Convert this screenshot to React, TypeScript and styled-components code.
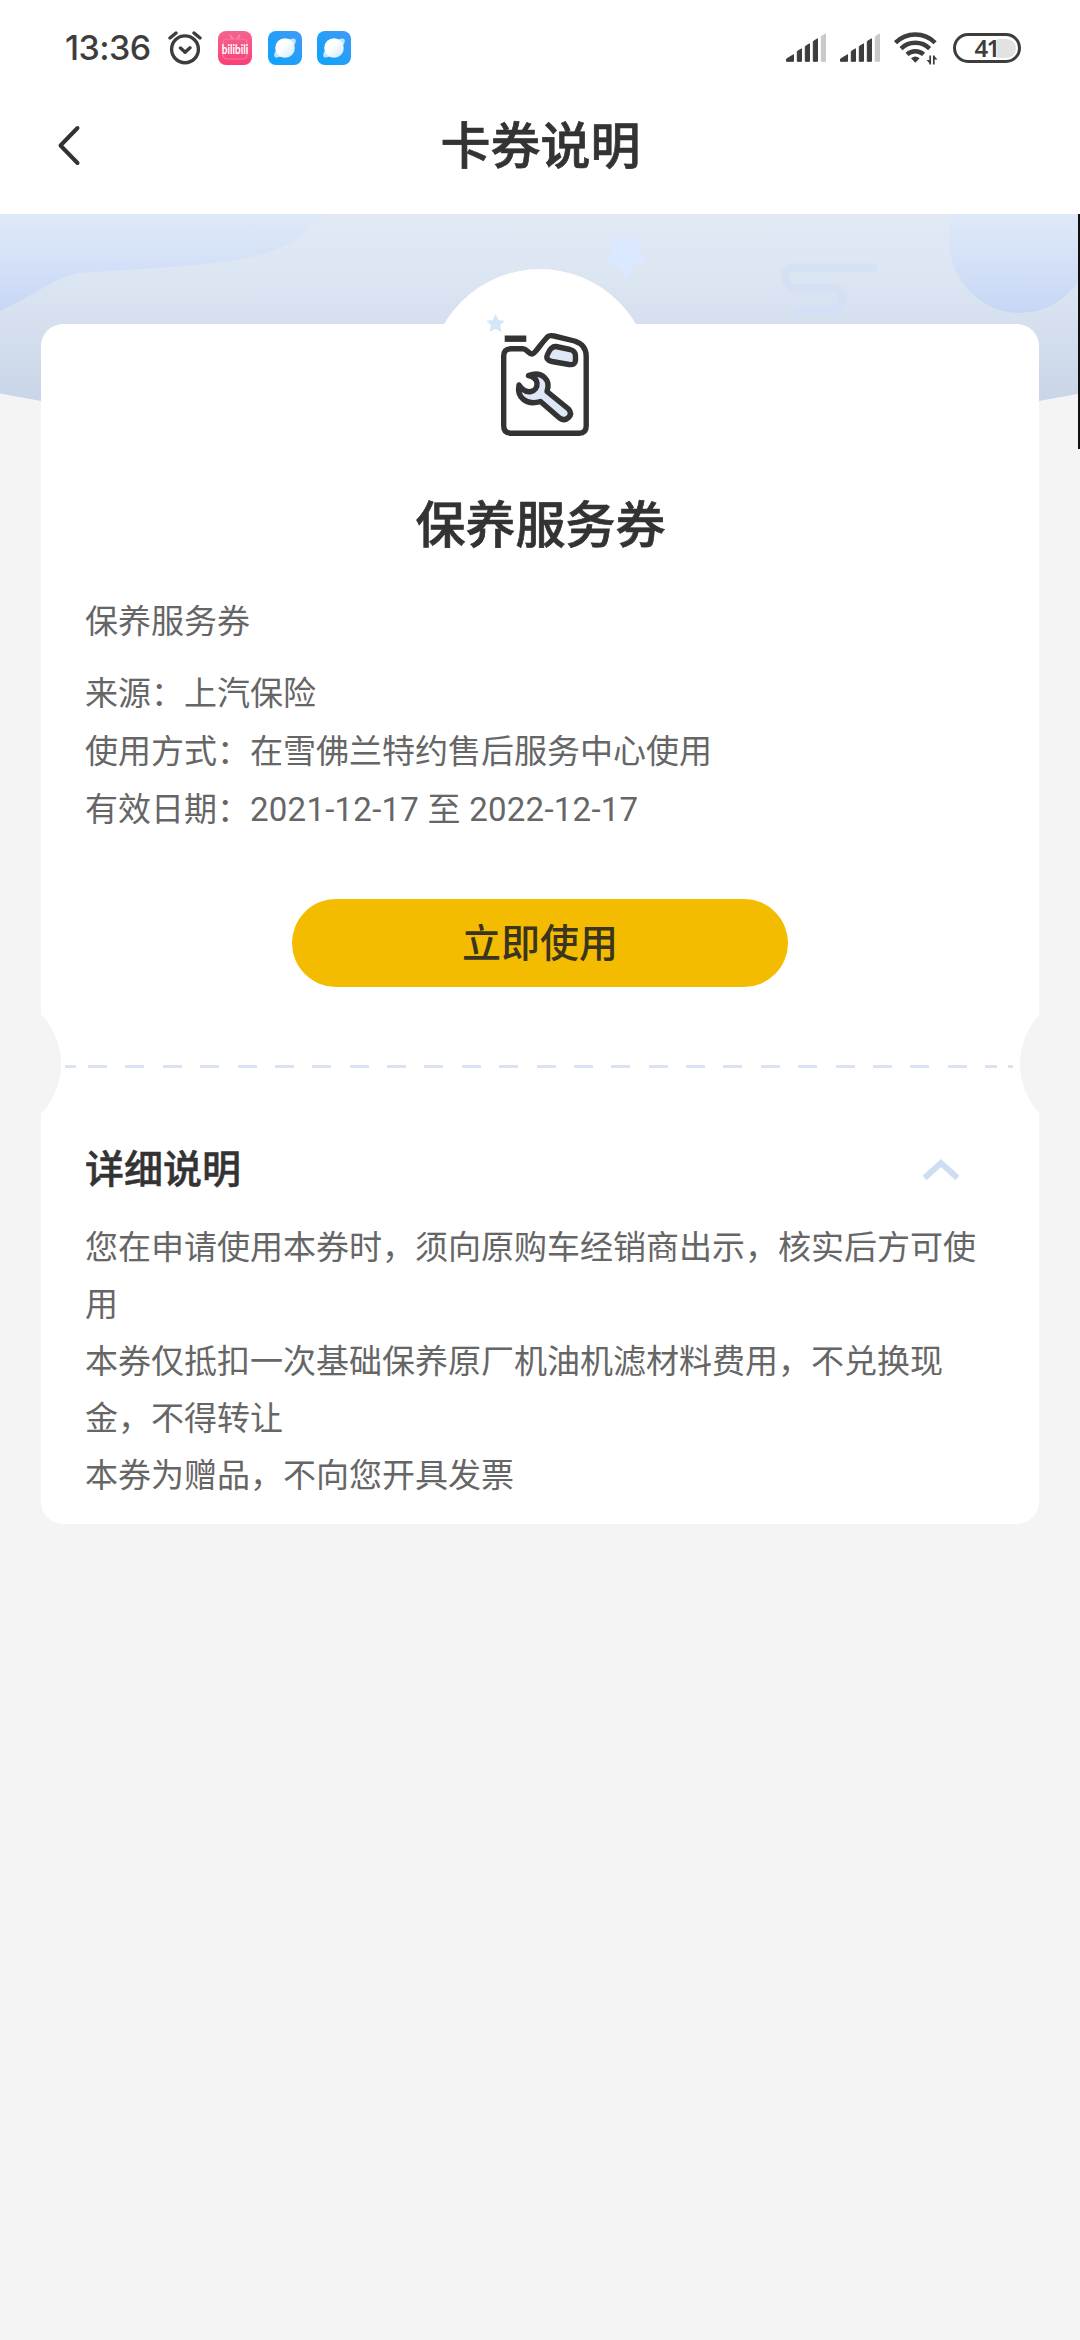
import React from "react";
import styled, { createGlobalStyle } from "styled-components";

const GlobalStyle = createGlobalStyle`
  * { box-sizing: border-box; }
  body {
    margin: 0;
    background: #f4f4f4;
    font-family: Roboto, "Noto Sans CJK SC", sans-serif;
    color: #333;
  }
`;

const Screen = styled.div`
  width: 1080px;
  height: 2340px;
  display: flex;
  flex-direction: column;
  background: #f4f4f4;
  overflow: hidden;
`;

const StatusBar = styled.header`
  height: 90px;
  padding: 6px 59px 0 65px;
  display: flex;
  align-items: center;
  justify-content: space-between;
  background: #fff;
`;

const StatusGroup = styled.div<{ $gap: number }>`
  display: flex;
  align-items: center;
  gap: ${(p) => p.$gap}px;
`;

const Clock = styled.span`
  width: 87px;
  font: 500 34px/40px Inter, sans-serif;
  letter-spacing: -0.6px;
  color: #3d3d3d;
  white-space: nowrap;
`;

const Battery = styled.div`
  width: 68px;
  height: 30px;
  margin-left: 2px;
  border: 3px solid #3d3d3d;
  border-radius: 15px;
  padding: 2.5px;
  display: flex;
`;

const BatteryLevel = styled.div`
  flex: 1;
  border-radius: 10px;
  background: linear-gradient(90deg, #fff 38px, #e2e2e2 38px);
  display: flex;
  align-items: center;
  justify-content: center;
  font: 600 24px/19px "Noto Sans", sans-serif;
  letter-spacing: -1.8px;
  color: #3d3d3d;
  padding: 0 1px 1px 0;
`;

const NavBar = styled.nav`
  height: 124px;
  flex: none;
  padding: 0 57px 13px;
  display: grid;
  grid-template-columns: 30px 1fr 30px;
  align-items: center;
  background: #fff;
`;

const BackButton = styled.button`
  border: 0;
  padding: 0;
  background: none;
  display: flex;
`;

const NavTitle = styled.h1`
  margin: 0;
  padding: 2px 0 0 1px;
  font-size: 50px;
  line-height: 60px;
  font-weight: 500;
  text-align: center;
  -webkit-text-stroke: 0.7px #333;
`;

const Content = styled.main`
  position: relative;
  flex: 1;
  padding: 110px 41px 0;
`;

const Banner = styled.svg`
  position: absolute;
  left: 0;
  top: 0;
`;

const ScrollThumb = styled.i`
  position: absolute;
  right: 0;
  top: 0;
  width: 2px;
  height: 235px;
  background: #111;
`;

const Card = styled.section`
  position: relative;
  width: 998px;
  height: 1200px;
  border-radius: 22px;
  background: #fff;
  display: flex;
  flex-direction: column;
`;

const Halo = styled.i`
  position: absolute;
  left: 388px;
  top: -55px;
  width: 222px;
  height: 222px;
  border-radius: 50%;
  background: #fff;
`;

const CouponIcon = styled.svg`
  position: absolute;
  left: 440px;
  top: -14px;
`;

const Summary = styled.div`
  position: relative;
  height: 691px;
  padding: 172px 44px 0;
  display: flex;
  flex-direction: column;
`;

const CouponTitle = styled.h2`
  margin: 0;
  padding-left: 1px;
  font-size: 50px;
  line-height: 60px;
  font-weight: 500;
  text-align: center;
  -webkit-text-stroke: 0.7px #333;
`;

const Line = styled.p<{ $after?: number; $height: number }>`
  margin: 0 0 ${(p) => p.$after ?? 0}px;
  font-size: 33px;
  line-height: ${(p) => p.$height}px;
  color: #666;
`;

const DateRange = styled.span`
  letter-spacing: 0.25px;
`;

const Info = styled.div`
  padding-top: 37px;
`;

const UseButton = styled.button`
  width: 496px;
  height: 88px;
  margin: 60px auto 0;
  padding: 2px 0 0;
  border: 0;
  border-radius: 44px;
  background: #f4bc00;
  color: #3b3520;
  font: 500 39px/56px Roboto, "Noto Sans CJK SC", sans-serif;
`;

const Perforation = styled.div`
  position: relative;
  height: 98px;
  overflow: hidden;
  display: flex;
  align-items: center;
  padding: 4px 26px 0 24px;
`;

const Notch = styled.i<{ $side: "left" | "right" }>`
  position: absolute;
  top: -23px;
  ${(p) => p.$side}: -124.5px;
  width: 144px;
  height: 144px;
  border-radius: 50%;
  background: #f4f4f4;
`;

const Dash = styled.i<{ $width: number; $gap: number }>`
  width: ${(p) => p.$width}px;
  height: 3px;
  margin-right: ${(p) => p.$gap}px;
  background: #dbe4f3;
`;

const DashRun = styled.i`
  flex: 1;
  height: 3px;
  background: repeating-linear-gradient(90deg, #dbe4f3 0 19px, #fff 19px 37.38px);
`;

const Details = styled.div`
  padding: 25px 44px 0;
`;

const DetailsHeader = styled.div`
  height: 63px;
  padding-right: 34px;
  display: flex;
  align-items: center;
  justify-content: space-between;
`;

const DetailsTitle = styled.h3`
  margin: 0;
  font-size: 39px;
  line-height: 58px;
  font-weight: 500;
  -webkit-text-stroke: 0.5px #333;
`;

const DetailsBody = styled.div`
  padding-top: 18px;
`;

const AlarmIcon = () => (
  <svg width="35" height="36" viewBox="0 0 35 36" fill="none" stroke="#3d3d3d" strokeWidth="3.4" strokeLinecap="round" strokeLinejoin="round">
    <circle cx="17" cy="19.3" r="13.4" />
    <path d="M12.500 18L17.100 22.200 22 17.800M2 8L8 3M32 8L26 3" />
  </svg>
);

const BiliIcon = () => (
  <svg width="34" height="34" viewBox="0 0 34 34">
    <defs>
      <linearGradient id="bili" x1="0" y1="0" x2="0" y2="1">
        <stop offset="0" stopColor="#f4648f" />
        <stop offset="1" stopColor="#fb3f78" />
      </linearGradient>
    </defs>
    <rect width="34" height="34" rx="8" fill="url(#bili)" />
    <path d="M12 4l3 4M22 4l-3 4" stroke="#f98bab" strokeWidth="1.6" />
    <rect x="5" y="8" width="24" height="20" rx="4" fill="none" stroke="#f77ba0" strokeWidth="1.2" />
    <text x="17" y="17" transform="scale(1 1.35)" textAnchor="middle" fill="#fff" fontFamily="Lato, sans-serif" fontWeight="700" fontSize="10">bilibili</text>
  </svg>
);

const PlanetIcon = () => (
  <svg width="34" height="34" viewBox="0 0 34 34">
    <defs>
      <linearGradient id="sky" x1="1" y1="0" x2="0" y2="1">
        <stop offset="0" stopColor="#3f9af8" />
        <stop offset="1" stopColor="#0aa4fb" />
      </linearGradient>
      <linearGradient id="globe" x1="0" y1="0" x2="1" y2="1">
        <stop offset="0.4" stopColor="#fff" />
        <stop offset="1" stopColor="#cfe6fc" />
      </linearGradient>
    </defs>
    <rect width="34" height="34" rx="8" fill="url(#sky)" />
    <ellipse cx="17" cy="17" rx="13.500" ry="5" fill="#c4e3fd" transform="rotate(-40 17 17)" />
    <circle cx="17" cy="17" r="9.800" fill="url(#globe)" />
  </svg>
);

const SignalIcon = () => (
  <svg width="41" height="30" viewBox="0 0 41 30">
    <g fill="#3d3d3d" stroke="#3d3d3d" strokeWidth="1" strokeLinejoin="round">
      <path d="M.5 28.300V26l7-4.300v6.600z" />
      <path d="M11.300 28.300V18.400l4.200-2.600v12.500z" />
      <path d="M19.300 28.300V13.400l4.200-2.600v17.500z" />
      <path d="M27.300 28.300V8.400l4.200-2.600v22.500z" />
    </g>
    <path d="M35.300 28.300V3.600l4.200-2.600v27.300z" fill="#c9c9c9" stroke="#c9c9c9" strokeWidth="1" strokeLinejoin="round" />
  </svg>
);

const WifiIcon = () => (
  <svg width="44" height="34" viewBox="0 0 44 34">
    <g fill="none" stroke="#3d3d3d" strokeWidth="4.4">
      <path d="M1.500 11.700a28 28 0 0 1 39.600 0" />
      <path d="M7 17.600a20.500 20.500 0 0 1 28.600 0" />
      <path d="M13 23.400a12.500 12.500 0 0 1 16.600 0" />
    </g>
    <path d="M17 27.200q4.300-3.600 8.600 0l-4.300 4.600z" fill="#3d3d3d" />
    <path d="M36.200 33.500V24.500M39.800 33.500V24.500" fill="none" stroke="#3d3d3d" strokeWidth="1.7" />
    <path d="M32.500 29h3.700v4zM43.500 28.500h-3.700v-4z" fill="#3d3d3d" />
  </svg>
);

const BannerArt = () => (
  <Banner width="1080" height="200" viewBox="0 214 1080 200">
    <defs>
      <linearGradient id="band" gradientUnits="userSpaceOnUse" x1="0" y1="214" x2="0" y2="401">
        <stop offset="0" stopColor="#e1e9f5" />
        <stop offset="0.35" stopColor="#dce5f2" />
        <stop offset="1" stopColor="#c9d5e8" />
      </linearGradient>
      <linearGradient id="shape" gradientUnits="userSpaceOnUse" x1="0" y1="214" x2="0" y2="312">
        <stop offset="0" stopColor="#dee9f8" />
        <stop offset="0.5" stopColor="#d4e0f7" />
        <stop offset="1" stopColor="#c6d7f5" />
      </linearGradient>
    </defs>
    <path d="M0 214H1080V393.500L1039 401 540 450 41 401 0 393.500z" fill="url(#band)" />
    <path d="M0 214H325C310 224 305 238 285 246C240 268 130 268 80 273C55 277 40 292 0 311z" fill="url(#shape)" />
    <ellipse cx="1020" cy="240" rx="71" ry="73" fill="url(#shape)" />
    <path d="M610 235L625.500 243 640 235 637.500 252 649 261 633 265 626.500 281 619 265.500 603 263 613 252z" fill="#dae9ff" />
    <path d="M873 267.500H793C782 269 782 288 796 288H832C847 289 846 309 832 310H797" fill="none" stroke="#d3dff6" strokeOpacity="0.85" strokeWidth="8" strokeLinecap="round" />
  </Banner>
);

const OilCanIcon = () => (
  <CouponIcon width="120" height="130" viewBox="480 310 120 130">
    <path d="M494.600 314l2.900 6 6.500.7-4.800 4.600 1.300 6.600-5.900-3.200-5.900 3.200 1.300-6.600-4.800-4.600 6.500-.7z" fill="#d3e7fb" />
    <g fill="none" stroke="#333" strokeWidth="5.4" strokeLinejoin="round">
      <path d="M503.700 338.700h21.600" strokeWidth="6.4" />
      <path d="M510 348.800H522C526 348.800 527.500 354 531 354C534 354 538 346 545.500 338C548 335 550 335.300 553 336L573.500 341C581 343.500 585.200 348.500 585.200 356V426Q585.200 433.200 578 433.200H510Q502.700 433.200 502.700 426V356Q502.700 348.800 510 348.800z" />
      <path d="M555 346.500L569 349.500Q574.500 351 574.500 356V360.500Q574 365.500 568 364.500L551 361.500Q544 360 546.500 354.500Q550 346 555 346.500z" fill="#dfe6f6" />
      <path d="M527.500 375.500C541 370.500 550 380 546 391.500L567.500 409Q571.500 413.500 567.500 417.500Q563.500 421.500 558.500 418L539.500 401.500C525 406 515.500 397 518 385C525 396 537 392 536 383C535.500 378 532 376.500 527.500 375.500z" fill="#dfe6f6" />
    </g>
  </CouponIcon>
);

const infoLines = [
  { text: "保养服务券", after: 14 },
  { text: "来源：上汽保险" },
  { text: "使用方式：在雪佛兰特约售后服务中心使用" },
];

const terms = [
  "您在申请使用本券时，须向原购车经销商出示，核实后方可使用",
  "本券仅抵扣一次基础保养原厂机油机滤材料费用，不兑换现金，不得转让",
  "本券为赠品，不向您开具发票",
];

export default function App() {
  return (
    <Screen>
      <GlobalStyle />
      <StatusBar>
        <StatusGroup $gap={15.5}>
          <Clock>13:36</Clock>
          <AlarmIcon />
          <BiliIcon />
          <PlanetIcon />
          <PlanetIcon />
        </StatusGroup>
        <StatusGroup $gap={13}>
          <SignalIcon />
          <SignalIcon />
          <WifiIcon />
          <Battery>
            <BatteryLevel>41</BatteryLevel>
          </Battery>
        </StatusGroup>
      </StatusBar>
      <NavBar>
        <BackButton>
          <svg width="26" height="42" viewBox="0 0 26 42" fill="none" stroke="#333" strokeWidth="4" strokeLinecap="round" strokeLinejoin="round">
            <path d="M20.500 3L3.500 20.500 20.500 38" />
          </svg>
        </BackButton>
        <NavTitle>卡券说明</NavTitle>
      </NavBar>
      <Content>
        <BannerArt />
        <ScrollThumb />
        <Card>
          <Halo />
          <Summary>
            <CouponTitle>保养服务券</CouponTitle>
            <Info>
              {infoLines.map((line) => (
                <Line key={line.text} $height={58} $after={line.after}>
                  {line.text}
                </Line>
              ))}
              <Line $height={58}>
                有效日期：<DateRange>2021-12-17 至 2022-12-17</DateRange>
              </Line>
            </Info>
            <UseButton>立即使用</UseButton>
          </Summary>
          <OilCanIcon />
          <Perforation>
            <Notch $side="left" />
            <Notch $side="right" />
            <Dash $width={11} $gap={12} />
            <DashRun />
            <Dash $width={12} $gap={11} />
            <Dash $width={5} $gap={0} />
          </Perforation>
          <Details>
            <DetailsHeader>
              <DetailsTitle>详细说明</DetailsTitle>
              <svg width="40" height="26" viewBox="0 0 40 26" fill="none" stroke="#cfddf4" strokeWidth="6">
                <path d="M3.500 21L20 6 36.500 21" />
              </svg>
            </DetailsHeader>
            <DetailsBody>
              {terms.map((term) => (
                <Line key={term} $height={57}>
                  {term}
                </Line>
              ))}
            </DetailsBody>
          </Details>
        </Card>
      </Content>
    </Screen>
  );
}
